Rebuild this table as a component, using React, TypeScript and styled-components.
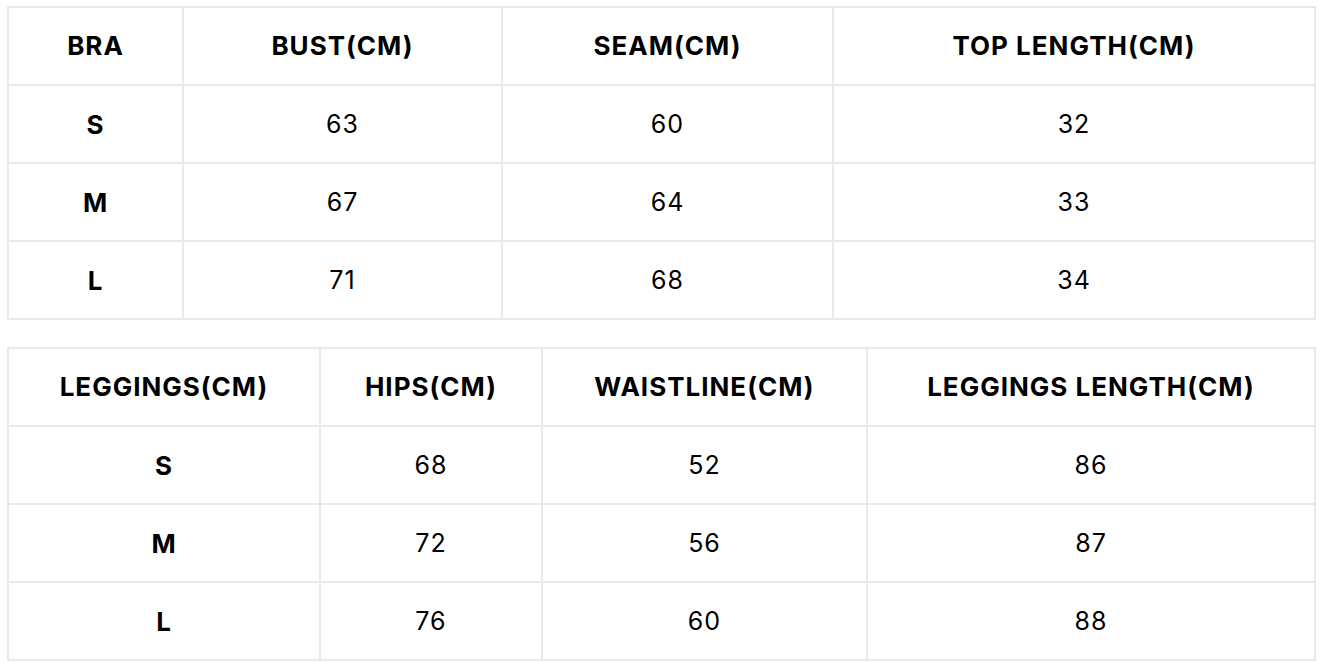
import styled, { createGlobalStyle } from "styled-components";

const GlobalStyle = createGlobalStyle`
    body {
        margin: 0;
        background: #ffffff;
        font-family: "Inter", "Open Sans", sans-serif;
        color: #000000;
    }
`;

type SizeTable = {
    columns: string[];
    widths: number[];
    rows: string[][];
};

const BRA: SizeTable = {
    columns: ["BRA", "BUST(CM)", "SEAM(CM)", "TOP LENGTH(CM)"],
    widths: [175, 319, 331, 482],
    rows: [
        ["S", "63", "60", "32"],
        ["M", "67", "64", "33"],
        ["L", "71", "68", "34"],
    ],
};

const LEGGINGS: SizeTable = {
    columns: ["LEGGINGS(CM)", "HIPS(CM)", "WAISTLINE(CM)", "LEGGINGS LENGTH(CM)"],
    widths: [312, 222, 325, 448],
    rows: [
        ["S", "68", "52", "86"],
        ["M", "72", "56", "87"],
        ["L", "76", "60", "88"],
    ],
};

const Chart: React.FC<{ data: SizeTable }> = ({ data }) => (
    <Table>
        <colgroup>
            {data.widths.map((w, i) => (
                <col key={i} style={{ width: w }} />
            ))}
        </colgroup>
        <thead>
            <tr>
                {data.columns.map((c) => (
                    <HeadCell key={c}>{c}</HeadCell>
                ))}
            </tr>
        </thead>
        <tbody>
            {data.rows.map((row) => (
                <tr key={row[0]}>
                    {row.map((v, i) => (
                        <Cell key={i} $label={i === 0}>{v}</Cell>
                    ))}
                </tr>
            ))}
        </tbody>
    </Table>
);

const App: React.FC = () => (
    <>
        <GlobalStyle />
        <Page>
            <Chart data={BRA} />
            <Chart data={LEGGINGS} />
        </Page>
    </>
);

const Page = styled.main`
    display: flex;
    flex-direction: column;
    gap: 27px;
    padding: 6px 0 0 7px;
`;

const Table = styled.table`
    width: 1309px;
    table-layout: fixed;
    border-collapse: separate;
    border-spacing: 0;
    border-top: 2px solid #e9e9e9;
    border-left: 2px solid #e9e9e9;
`;

const HeadCell = styled.th`
    box-sizing: border-box;
    height: 78px;
    padding: 0 0 2px;
    border-right: 2px solid #e9e9e9;
    border-bottom: 2px solid #e9e9e9;
    font-size: 26px;
    font-weight: 700;
    text-align: center;
    vertical-align: middle;
    letter-spacing: 1px;
    white-space: nowrap;
`;

const Cell = styled.td<{ $label: boolean }>`
    box-sizing: border-box;
    height: 78px;
    padding: 0;
    border-right: 2px solid #e9e9e9;
    border-bottom: 2px solid #e9e9e9;
    font-size: ${(p) => (p.$label ? 26 : 25)}px;
    font-weight: ${(p) => (p.$label ? 700 : 400)};
    letter-spacing: 1px;
    text-align: center;
    vertical-align: middle;
`;

export default App;
